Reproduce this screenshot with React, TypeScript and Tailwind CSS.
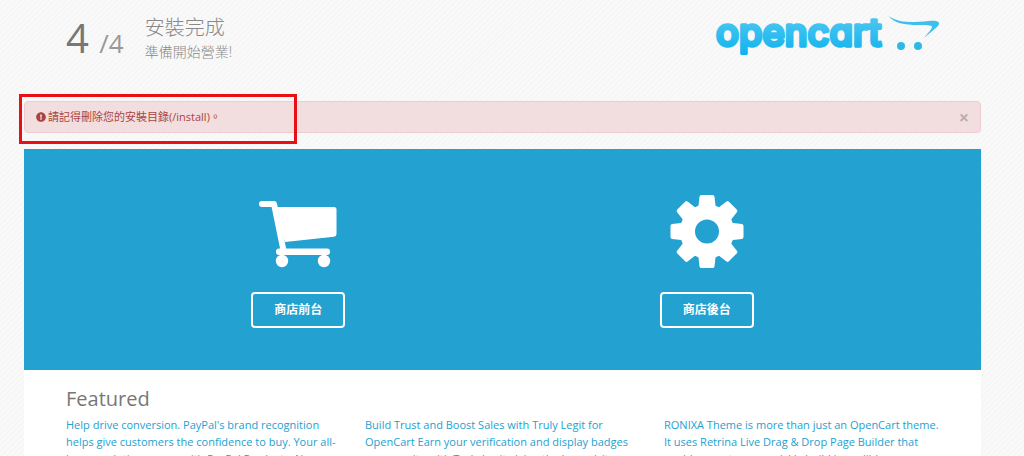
import React, { useState } from 'react';
import { FaExclamationCircle } from 'react-icons/fa';

const features = [
  "Help drive conversion. PayPal's brand recognition helps give customers the confidence to buy. Your all-in-one solution comes with PayPal Products. Now",
  'Build Trust and Boost Sales with Truly Legit for OpenCart Earn your verification and display badges on your site with Truly Legit giving the base visitors',
  'RONIXA Theme is more than just an OpenCart theme. It uses Retrina Live Drag & Drop Page Builder that enables you to very quickly build incredible',
];

const Logo = () => (
  <svg className="w-[228px] h-[60px] overflow-visible" viewBox="0 0 228 60" role="img" aria-label="opencart">
    <defs>
      <linearGradient id="logo" gradientUnits="userSpaceOnUse" x1="0" y1="4" x2="0" y2="44">
        <stop offset="0" stopColor="#4fc8f0" />
        <stop offset="1" stopColor="#0cb2ee" />
      </linearGradient>
    </defs>
    <text
      x="5"
      y="34"
      fill="url(#logo)"
      stroke="url(#logo)"
      strokeWidth="3.500"
      strokeLinejoin="round"
      className="font-['Inter',sans-serif] text-[38px] font-medium [font-feature-settings:'cv11']"
    >
      opencart
    </text>
    <path
      d="M178 4C184 9 193 10 203 10C212 10 219 8 225 9C229 10 229 12 226 15L213 26C217 21 221 17 221 15C221 13 215 13 207 13C194 13 182 11 178 4Z"
      fill="#3fc0ec"
    />
    <circle cx="190" cy="34" r="4" fill="#2db9e8" />
    <circle cx="207" cy="34" r="4" fill="#2db9e8" />
  </svg>
);

const CartIcon = () => (
  <svg className="w-20 h-[73px]" viewBox="0 -5 80 73" fill="currentColor" aria-hidden="true">
    <path d="M4 4H16L25 48" fill="none" stroke="currentColor" strokeWidth="6" strokeLinecap="round" strokeLinejoin="round" />
    <path d="M16 7H76Q78.500 7 78.500 9.500V34Q78.500 36.500 76 36.800L27 42Z" />
    <rect x="18" y="48.500" width="54" height="6.500" rx="3" />
    <circle cx="24" cy="61" r="6.200" />
    <circle cx="66" cy="61" r="6.200" />
  </svg>
);

const teeth = [0, 45, 90, 135, 180, 225, 270, 315];

const GearIcon = () => (
  <svg className="w-20 h-[73px]" viewBox="-40 -36.5 80 73" fill="currentColor" aria-hidden="true">
    <circle r="19.500" fill="none" stroke="currentColor" strokeWidth="15" />
    {teeth.map((angle) => (
      <path
        key={angle}
        transform={`rotate(${angle})`}
        d="M-10.500 -23L-8.500 -26L-7.500 -35Q-7.200 -36.500 -5.500 -36.500H5.500Q7.200 -36.500 7.500 -35L8.500 -26L10.500 -23Z"
      />
    ))}
  </svg>
);

const Header = () => (
  <header className="flex justify-between h-[101px] px-[42px]">
    <div className="flex text-[#777]">
      <h1 className="pt-2 text-[40px] leading-[60px]">
        4 <small className="text-[26px] text-[#999]">/4</small>
      </h1>
      <div className="pl-[21px] pt-[15px] font-light text-[#888]">
        <h3 className="text-xl leading-[26px]">安裝完成</h3>
        <p className="text-sm leading-[22px]">準備開始營業!</p>
      </div>
    </div>
    <div className="pt-3">
      <Logo />
    </div>
  </header>
);

const App = () => {
  const [showAlert, setShowAlert] = useState(true);
  return (
    <div className="h-screen overflow-hidden bg-[#f8f8f8] bg-[repeating-linear-gradient(135deg,#f9f9f9_0px,#f9f9f9_2px,#f4f4f4_3px,#f9f9f9_4px)] pl-6 pr-[43px] font-['Open_Sans','Noto_Sans_CJK_TC',sans-serif] text-[11px]">
      <Header />
      {showAlert && (
        <div className="relative mb-4 flex h-8 items-center justify-between rounded-sm border border-[#ebccd1] bg-[#f2dede] px-[11px] text-[#a94442]">
          <p className="flex items-center gap-[2px]">
            <FaExclamationCircle className="size-[10px]" />
            請記得刪除您的安裝目錄(/install)。
          </p>
          <button aria-label="Close" className="text-lg font-bold text-[#bbaeae]" onClick={() => setShowAlert(false)}>
            ×
          </button>
          {/* highlight box */}
          <div className="pointer-events-none absolute -top-2 -left-1.5 h-[50px] w-[278px] border-3 border-[#e90f15]" />
        </div>
      )}
      <section className="grid grid-cols-2 bg-[#23a1d1] px-[70px] pt-[46px] pb-[42px] text-white">
        <div className="flex flex-col items-center gap-6">
          <CartIcon />
          <a href="#store" className="rounded border-2 px-[21px] py-2 text-xs font-bold">
            商店前台
          </a>
        </div>
        <div className="flex flex-col items-center gap-6">
          <GearIcon />
          <a href="#admin" className="rounded border-2 px-[21px] py-2 text-xs font-bold">
            商店後台
          </a>
        </div>
      </section>
      <section className="bg-white px-[42px] pt-4 pb-10">
        <h2 className="text-xl leading-[26px] text-[#777]">Featured</h2>
        <div className="grid grid-cols-3 gap-6 pt-1">
          {features.map((text) => (
            <a key={text} href="#featured" className="leading-[17px] text-[#23a1d1]">
              {text}
            </a>
          ))}
        </div>
      </section>
    </div>
  );
};

export default App;
